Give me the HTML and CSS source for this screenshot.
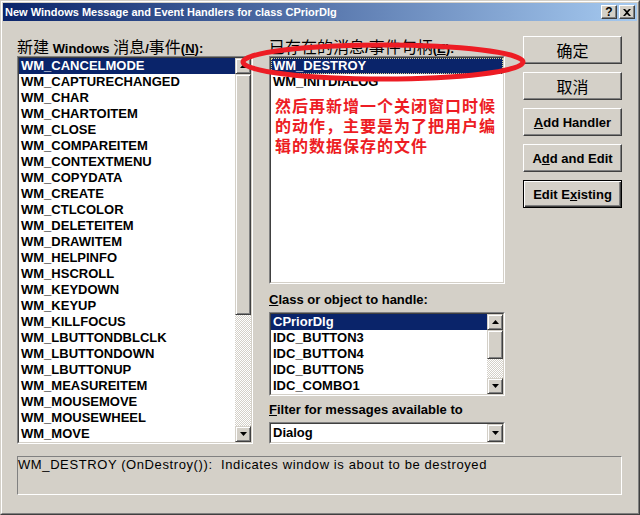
FILE: index.html
```html
<!DOCTYPE html>
<html>
<head>
<meta charset="utf-8">
<link rel="stylesheet" href="styles.css">
</head>
<body>
<div class="window">
  <div class="frame">
    <div class="titlebar">
      <span class="title">New Windows Message and Event Handlers for class CPriorDlg</span>
      <div class="tb-btns">
        <span class="tbtn q">?</span>
        <span class="tbtn"><svg width="8" height="7" viewBox="0 0 8 7"><path d="M0 0h2l2 2 2-2h2L5 3.5 8 7H6L4 5 2 7H0l3-3.5z" fill="#000"/></svg></span>
      </div>
    </div>
    <div class="content">
      <div class="cols">
        <div class="col-left">
          <div class="label"><span class="cjk">新建</span> Windows <span class="cjk">消息</span>/<span class="cjk">事件</span>(<u>N</u>):</div>
          <div class="sunken lb-left">
            <div class="in">
              <ul class="items">
                <li class="item sel">WM_CANCELMODE</li>
                <li class="item">WM_CAPTURECHANGED</li>
                <li class="item">WM_CHAR</li>
                <li class="item">WM_CHARTOITEM</li>
                <li class="item">WM_CLOSE</li>
                <li class="item">WM_COMPAREITEM</li>
                <li class="item">WM_CONTEXTMENU</li>
                <li class="item">WM_COPYDATA</li>
                <li class="item">WM_CREATE</li>
                <li class="item">WM_CTLCOLOR</li>
                <li class="item">WM_DELETEITEM</li>
                <li class="item">WM_DRAWITEM</li>
                <li class="item">WM_HELPINFO</li>
                <li class="item">WM_HSCROLL</li>
                <li class="item">WM_KEYDOWN</li>
                <li class="item">WM_KEYUP</li>
                <li class="item">WM_KILLFOCUS</li>
                <li class="item">WM_LBUTTONDBLCLK</li>
                <li class="item">WM_LBUTTONDOWN</li>
                <li class="item">WM_LBUTTONUP</li>
                <li class="item">WM_MEASUREITEM</li>
                <li class="item">WM_MOUSEMOVE</li>
                <li class="item">WM_MOUSEWHEEL</li>
                <li class="item">WM_MOVE</li>
              </ul>
              <div class="vscroll">
                <div class="raised sbtn"><svg width="7" height="4" viewBox="0 0 7 4"><path d="M3.5 0L7 4H0z" fill="#000"/></svg></div>
                <div class="raised thumb thumb-left"></div>
                <div class="track"></div>
                <div class="raised sbtn"><svg width="7" height="4" viewBox="0 0 7 4"><path d="M0 0h7L3.5 4z" fill="#000"/></svg></div>
              </div>
            </div>
          </div>
        </div>
        <div class="col-mid">
          <div class="label"><span class="cjk">已存在的消息</span>/<span class="cjk">事件句柄</span>(<u>E</u>):</div>
          <div class="sunken lb-mid">
            <div class="in">
              <ul class="items">
                <li class="item sel focus">WM_DESTROY</li>
                <li class="item">WM_INITDIALOG</li>
                <li class="note">
                  <div class="note-line">然后再新增一个关闭窗口时候</div>
                  <div class="note-line">的动作，主要是为了把用户编</div>
                  <div class="note-line">辑的数据保存的文件</div>
                </li>
              </ul>
            </div>
          </div>
          <div class="label label2"><u>C</u>lass or object to handle:</div>
          <div class="sunken lb-class">
            <div class="in">
              <ul class="items">
                <li class="item sel">CPriorDlg</li>
                <li class="item">IDC_BUTTON3</li>
                <li class="item">IDC_BUTTON4</li>
                <li class="item">IDC_BUTTON5</li>
                <li class="item">IDC_COMBO1</li>
              </ul>
              <div class="vscroll">
                <div class="raised sbtn"><svg width="7" height="4" viewBox="0 0 7 4"><path d="M3.5 0L7 4H0z" fill="#000"/></svg></div>
                <div class="raised thumb thumb-class"></div>
                <div class="track"></div>
                <div class="raised sbtn"><svg width="7" height="4" viewBox="0 0 7 4"><path d="M0 0h7L3.5 4z" fill="#000"/></svg></div>
              </div>
            </div>
          </div>
          <div class="label label3"><u>F</u>ilter for messages available to</div>
          <div class="sunken combo">
            <div class="in">
              <span class="combo-text">Dialog</span>
              <div class="raised combo-btn"><svg width="7" height="4" viewBox="0 0 7 4"><path d="M0 0h7L3.5 4z" fill="#000"/></svg></div>
            </div>
          </div>
        </div>
        <div class="col-right">
          <div class="btn"><span class="cjk">确定</span></div>
          <div class="btn"><span class="cjk">取消</span></div>
          <div class="btn"><span><u>A</u>dd Handler</span></div>
          <div class="btn"><span>A<u>d</u>d and Edit</span></div>
          <div class="btn default"><span>Edit E<u>x</u>isting</span></div>
        </div>
      </div>
      <div class="desc">WM_DESTROY (OnDestroy()):&nbsp; Indicates window is about to be destroyed</div>
    </div>
  </div>
  <svg class="ellipse" width="640" height="120" viewBox="0 0 640 120"><ellipse cx="383" cy="62" rx="140" ry="17" fill="none" stroke="#ed1c24" stroke-width="5"/></svg>
</div>
</body>
</html>
```
FILE: styles.css
```css
* { box-sizing: border-box; }
html, body { margin: 0; padding: 0; }
body {
  width: 640px;
  height: 515px;
  overflow: hidden;
  background: #d4d0c8;
  font-family: "Liberation Sans", Arial, sans-serif;
  color: #000;
}
.window {
  position: relative;
  width: 640px;
  height: 515px;
  background: #d4d0c8;
  border: 1px solid;
  border-color: #d4d0c8 #404040 #404040 #d4d0c8;
}
.frame {
  height: 100%;
  border: 1px solid;
  border-color: #fff #808080 #808080 #fff;
  padding: 1px;
}
.titlebar {
  height: 18px;
  display: flex;
  align-items: center;
  background: linear-gradient(to right, #0a246a, #a6caf0);
  padding: 0 2px 0 2px;
}
.title {
  flex: 1;
  color: #fff;
  font-weight: bold;
  font-size: 11px;
  white-space: nowrap;
}
.tb-btns { display: flex; gap: 2px; }
.tbtn {
  width: 16px;
  height: 14px;
  background: #d4d0c8;
  border: 1px solid;
  border-color: #fff #404040 #404040 #fff;
  box-shadow: inset -1px -1px #808080;
  display: flex;
  align-items: center;
  justify-content: center;
  font-weight: bold;
  font-size: 12px;
  line-height: 12px;
}
.content { padding: 15px 0 0 14px; }
.cols { display: flex; align-items: flex-start; }
.col-left { width: 236px; }
.col-mid { width: 236px; margin-left: 16px; }
.col-right {
  width: 99px;
  margin-left: 18px;
  display: flex;
  flex-direction: column;
  gap: 8px;
}
.label {
  margin-top: 1px;
  height: 19px;
  line-height: 19px;
  font-weight: bold;
  font-size: 13px;
  white-space: nowrap;
  overflow: visible;
}
.label u, .btn u { text-underline-offset: 1px; }
.cjk {
  font-family: "Noto Sans CJK SC", sans-serif;
  font-weight: normal;
  font-size: 16px;
  line-height: 19px;
}
.label2 { margin-top: 6px; height: 22px; line-height: 20px; }
.label3 { margin-top: 4px; height: 22px; line-height: 20px; }
.sunken {
  border: 1px solid;
  border-color: #808080 #fff #fff #808080;
}
.sunken > .in {
  height: 100%;
  border: 1px solid;
  border-color: #404040 #d4d0c8 #d4d0c8 #404040;
  background: #fff;
  display: flex;
  overflow: hidden;
}
.lb-left { height: 388px; }
.lb-mid { height: 228px; }
.lb-class { height: 84px; }
.items {
  flex: 1;
  min-width: 0;
  list-style: none;
  margin: 0;
  padding: 0;
}
.item {
  height: 16px;
  line-height: 16px;
  padding-left: 2px;
  font-weight: bold;
  font-size: 13px;
  white-space: nowrap;
}
.item.sel { background: #0a246a; color: #fff; }
.item.focus { outline: 1px dotted #d8d090; outline-offset: -1px; }
.note {
  margin-top: 5px;
  padding-left: 4px;
  color: #ed1c24;
  font-family: "Noto Sans CJK SC", sans-serif;
  font-weight: bold;
  font-size: 16px;
  letter-spacing: 1px;
}
.note-line {
  height: 20px;
  line-height: 20px;
  white-space: nowrap;
}
.vscroll {
  width: 16px;
  display: flex;
  flex-direction: column;
}
.raised {
  background: #d4d0c8;
  border: 1px solid;
  border-color: #d4d0c8 #404040 #404040 #d4d0c8;
  box-shadow: inset 1px 1px #fff, inset -1px -1px #808080;
}
.sbtn {
  height: 16px;
  flex: none;
  display: flex;
  align-items: center;
  justify-content: center;
}
.thumb { flex: none; }
.thumb-left { height: 241px; }
.thumb-class { height: 29px; }
.track {
  flex: 1;
  background-color: #fff;
  background-image: conic-gradient(#d4d0c8 25%, #fff 0 50%, #d4d0c8 0 75%, #fff 0);
  background-size: 2px 2px;
}
.combo { height: 22px; }
.combo .in { align-items: stretch; }
.combo-text {
  flex: 1;
  padding-left: 2px;
  font-weight: bold;
  font-size: 13px;
  line-height: 18px;
}
.combo-btn {
  width: 16px;
  display: flex;
  align-items: center;
  justify-content: center;
}
.btn {
  height: 28px;
  background: #d4d0c8;
  border: 1px solid;
  border-color: #fff #404040 #404040 #fff;
  box-shadow: inset -1px -1px #808080;
  display: flex;
  align-items: center;
  justify-content: center;
  font-weight: bold;
  font-size: 13px;
  white-space: nowrap;
}
.btn.default {
  border-color: #000;
  box-shadow: inset 1px 1px #fff, inset -1px -1px #404040, inset -2px -2px #808080;
}
.desc {
  margin-top: 12px;
  width: 605px;
  height: 39px;
  border: 1px solid;
  border-color: #808080 #fff #fff #808080;
  font-size: 13px;
  letter-spacing: 0.6px;
  line-height: 16px;
  white-space: nowrap;
}
.ellipse {
  position: absolute;
  left: -1px;
  top: -1px;
  pointer-events: none;
}
```
